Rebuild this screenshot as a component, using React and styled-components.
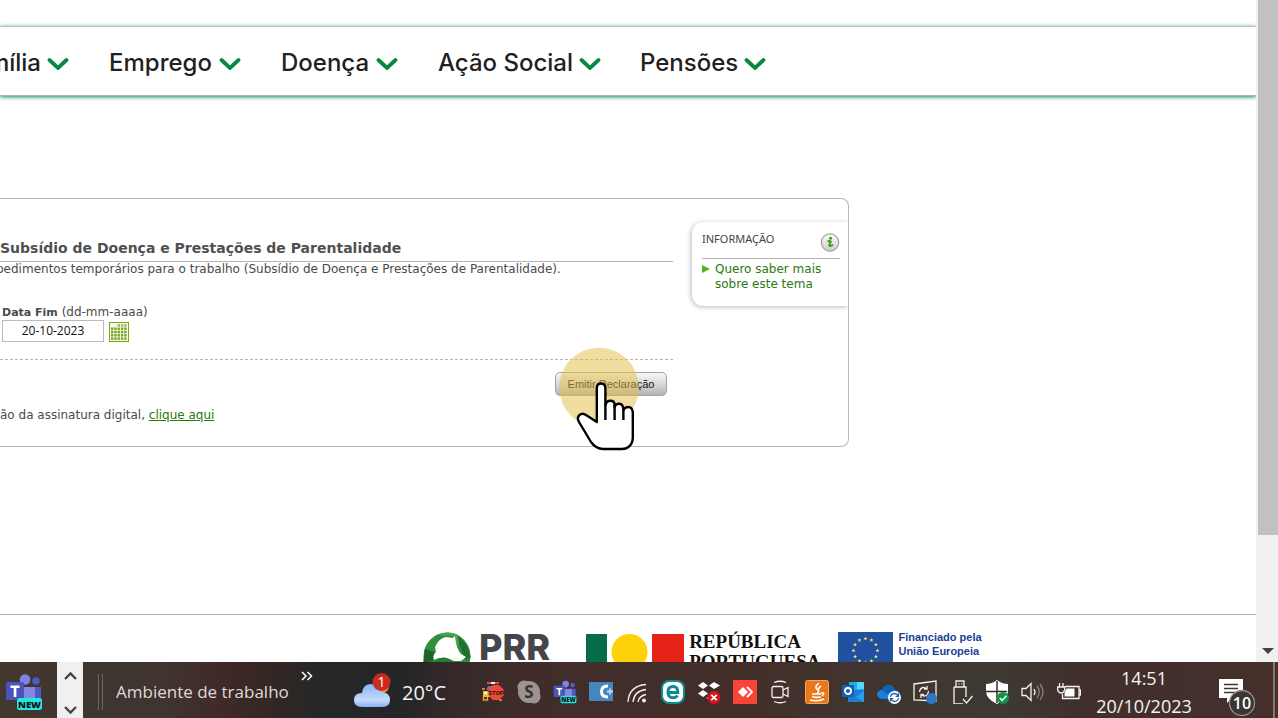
import React from "react";
import styled, { createGlobalStyle } from "styled-components";

const Global = createGlobalStyle`
  *, *::before, *::after { box-sizing: border-box; }
  body { margin: 0; background: #fff; overflow: hidden; font-family: "DejaVu Sans", sans-serif; color: #4a4a4a; }
  button { font: inherit; color: inherit; background: none; border: 0; padding: 0; margin: 0; cursor: pointer; }
  svg { display: block; flex: none; }
`;

const Desktop = styled.div`
  display: flex;
  flex-direction: column;
  height: 100vh;
`;
const Browser = styled.div`
  display: flex;
  flex: 1;
  min-height: 0;
`;
const Page = styled.div`
  flex: 1;
  min-width: 0;
  overflow: hidden;
  display: flex;
  flex-direction: column;
`;

/* Navigation */
const NavBar = styled.nav`
  flex: none;
  margin-top: 26px;
  height: 70px;
  padding-top: 3px;
  display: flex;
  align-items: center;
  border-top: 1px solid #bdc4c0;
  border-bottom: 1px solid #b9aeb2;
  box-shadow: 0 1px 4px #0b8a4c;
`;
const NavList = styled.div`
  display: flex;
  gap: 40px;
  margin-left: -41px;
`;
const NavItem = styled.button`
  display: flex;
  align-items: center;
  gap: 6px;
  flex: none;
  width: ${(p) => p.$width}px;
  justify-content: space-between;
  font: 500 24px/32px Inter, sans-serif;
  color: #212121;
  white-space: nowrap;
  &:first-child { justify-content: flex-end; }
`;

/* Form panel */
const Panel = styled.main`
  flex: none;
  width: 100%;
  max-width: 849px;
  margin-top: 102px;
  display: flex;
  justify-content: space-between;
  align-items: flex-start;
  border: 1px solid #b9b9b9;
  border-left: 0;
  border-radius: 0 8px 8px 0;
`;
const FormColumn = styled.form`
  flex: 1;
  max-width: 673px;
  padding: 38px 0 23px;
  font-size: 12px;
  line-height: 15px;
`;
const Title = styled.h1`
  margin: 0;
  padding-bottom: 2px;
  font: bold 14px/22px "DejaVu Sans", sans-serif;
  color: #505050;
  border-bottom: 1px solid #b5b5b5;
  white-space: nowrap;
`;
const Description = styled.p`
  margin: 0 0 28px;
  text-indent: -4px;
  white-space: nowrap;
`;
const Field = styled.div`
  padding: 0 0 17px 2px;
  border-bottom: 1px dashed #b5b5b5;
`;
const Label = styled.label`
  display: block;
  b { font-size: 11px; }
`;
const DateRow = styled.div`
  display: flex;
  align-items: flex-end;
  gap: 5px;
`;
const DateInput = styled.input`
  width: 102px;
  height: 22px;
  border: 1px solid #bbb;
  padding: 0 0 2px;
  text-align: center;
  font: 12px "Open Sans", sans-serif;
  color: #111;
`;
const Actions = styled.div`
  display: flex;
  justify-content: flex-end;
  padding: 12px 6px 12px 0;
`;
const ButtonAnchor = styled.div`
  position: relative;
`;
const SubmitButton = styled.button`
  display: block;
  width: 112px;
  height: 24px;
  border: 1px solid #a9a1a4;
  border-radius: 5px;
  background: linear-gradient(#f7f7f7, #d8d8d8 50%, #b4b4b4);
  font: 11px/20px "Liberation Sans", sans-serif;
  color: #111;
  white-space: nowrap;
`;
const Pointer = styled.svg`
  position: absolute;
  left: 4px;
  top: -25px;
  pointer-events: none;
`;
const Note = styled.p`
  margin: 0;
  a { color: #2a7a0c; }
`;

const InfoBox = styled.aside`
  width: 156px;
  height: 84px;
  margin-top: 23px;
  padding: 8px 8px 0 10px;
  border-radius: 11px 0 0 11px;
  box-shadow: -1px 1px 5px #bbb;
  clip-path: inset(-8px 0 -8px -8px);
`;
const InfoHead = styled.div`
  display: flex;
  justify-content: space-between;
  height: 29px;
  border-bottom: 1px solid #b5b5b5;
  h2 { margin: 0; font: 11px/18px "Noto Sans", sans-serif; color: #444; }
  svg { margin-top: 2px; }
`;
const InfoLink = styled.a`
  display: flex;
  gap: 5px;
  padding-top: 3px;
  font-size: 12px;
  line-height: 15px;
  color: #2a7a0c;
  text-decoration: none;
  white-space: nowrap;
  svg { margin-top: 3px; }
`;

/* Sponsors */
const Footer = styled.footer`
  flex: none;
  margin-top: 167px;
  padding: 17px 0 0 423px;
  border-top: 1px solid #b5b5b5;
  display: flex;
  align-items: flex-start;
`;
const Brand = styled.div`
  display: flex;
  align-items: flex-start;
  gap: ${(p) => p.$gap}px;
  margin-right: ${(p) => p.$after || 0}px;
  white-space: nowrap;
`;
const PrrName = styled.span`
  font: 800 36px/30px Inter, sans-serif;
  color: #45464b;
`;
const RepublicName = styled.span`
  font: bold 19px/20px "Liberation Serif", serif;
  color: #111;
`;
const UnionName = styled.span`
  font: bold 11px/14px "Liberation Sans", sans-serif;
  color: #1b3f94;
  margin-top: -2px;
`;

/* Window scroll bar */
const ScrollBar = styled.div`
  width: 22px;
  padding-left: 2px;
  background: #f1f1f1;
  display: flex;
  flex-direction: column;
`;
const ScrollThumb = styled.div`
  flex: 535;
  background: #c1c1c1;
`;
const ScrollRest = styled.div`
  flex: 105;
`;
const ScrollArrow = styled.button`
  height: 22px;
  display: grid;
  place-items: center;
`;

/* Task bar */
const TaskBar = styled.footer`
  flex: none;
  height: 56px;
  display: flex;
  align-items: stretch;
  color: #f4f4f4;
  font-family: "Open Sans", sans-serif;
  background: linear-gradient(90deg, #43382f 0, #3d3530 110px, #403431 160px, #402a28 220px, #352624 265px, #262728 320px, #242526 400px, #34292a 450px, #402d2a 520px, #432e29 740px, #403630 900px, #3e3933 1000px, #402f2b 1080px, #452f2b 100%);
`;
const TaskApp = styled.button`
  width: 57px;
  display: grid;
  place-items: center start;
  padding: 3px 0 0 5px;
`;
const Stepper = styled.div`
  width: 26px;
  background: #f0f0f0;
  display: flex;
  flex-direction: column;
  justify-content: space-between;
  align-items: center;
  padding: 9px 0 3px;
`;
const Grip = styled.div`
  width: 5px;
  height: 36px;
  margin: 12px 13px 0 15px;
  border: solid #6e6862;
  border-width: 0 1px;
`;
const Toolbar = styled.div`
  display: flex;
  width: 238px;
  font-size: 17px;
  line-height: 60px;
  color: #dedbd9;
  white-space: nowrap;
  button { align-self: flex-start; margin: 9px 0 0 12px; }
`;
const Weather = styled.button`
  display: flex;
  align-items: center;
  gap: 11px;
  width: 121px;
  font-size: 20px;
  white-space: nowrap;
  span { padding-top: 5px; }
`;
const Tray = styled.div`
  display: flex;
  padding-top: 4px;
`;
const TrayButton = styled.button`
  width: 36px;
  display: grid;
  place-items: center;
`;
const Clock = styled.time`
  width: 114px;
  text-align: center;
  font-size: 18px;
  line-height: 28px;
  padding-top: 2px;
  white-space: nowrap;
`;
const Alerts = styled.button`
  display: grid;
  place-items: center;
  margin: 14px 0 0 17px;
`;
const Edge = styled.div`
  margin-left: auto;
  width: 5px;
  border-left: 2px solid #857872;
`;

const Chevron = () => (
  <svg width="22" height="14" viewBox="0 0 22 14" fill="none" stroke="#078943" strokeWidth="3.800" strokeLinecap="round">
    <path d="M2.500 4 11 12l8.500-8" />
  </svg>
);

const CalendarIcon = () => (
  <svg width="20" height="20" viewBox="0 0 20 20">
    <rect x=".5" y=".5" width="19" height="19" fill="#f6f7f0" stroke="#78a615" />
    {[0, 1, 2, 3, 4].map((r) =>
      [0, 1, 2, 3, 4].map((c) =>
        r === 0 && c < 2 ? null : (
          <rect key={`${r}${c}`} x={2 + c * 3.3} y={2.200 + r * 3.3} width="2.400" height="2.400" fill={r === 0 ? "#96b750" : "#79a51a"} />
        )
      )
    )}
  </svg>
);

const InfoIcon = () => (
  <svg width="20" height="20" viewBox="0 0 20 20">
    <defs>
      <linearGradient id="disc" x2="0" y2="1">
        <stop stopColor="#fff" />
        <stop offset="1" stopColor="#ccc" />
      </linearGradient>
    </defs>
    <circle cx="10" cy="10.500" r="8.700" fill="url(#disc)" stroke="#a0a0a0" strokeWidth="1.200" />
    <circle cx="10.500" cy="6.200" r="1.500" fill="#3c9a1c" />
    <path d="M7.500 9.700Q10 8.500 10.800 9.500L9.200 13.500Q10 15 13 12.800" fill="none" stroke="#3c9a1c" strokeWidth="1.900" />
  </svg>
);

const PrrMark = () => (
  <svg width="49" height="48" viewBox="0 0 49 48">
    <circle cx="24" cy="24" r="23.500" fill="#2f8f3c" />
    <path d="M24 .5C38 0 47 12 47.500 26L39 19 29 4 15 3Q19 .7 24 .5Z" fill="#48a54c" />
    <path d="M35 4Q46 11 47.500 25L43 29 36 13Z" fill="#236f31" />
    <path d="M2 17 11 20 12 28 0 32Z" fill="#1c642b" />
    <path d="M12 15Q16 6 23 5L30 6L32 4Q33 16 38 22L43 25L38 29H31Q20 23 11 28Q9 23 13 20Z" fill="#fff" />
    <path d="M13 28Q22 22 30 30L24 40H4Z" fill="#277c36" />
  </svg>
);

const FlagMark = () => (
  <svg width="98" height="42" viewBox="0 0 98 42">
    <path d="M0 2h21v36H0z" fill="#076b48" />
    <circle cx="43.500" cy="20" r="18" fill="#ffd10a" />
    <path d="M66 2h32v36H66z" fill="#e62318" />
  </svg>
);

const EuropeFlag = () => (
  <svg width="55" height="37" viewBox="0 0 55 37">
    <path d="M0 0h55v37H0z" fill="#2050a0" />
    {Array.from({ length: 12 }, (_, i) => {
      const a = (i * Math.PI) / 6;
      return (
        <path
          key={i}
          transform={`translate(${27.5 + 12 * Math.sin(a)} ${18.5 - 12 * Math.cos(a)})`}
          d="M0-2 .6-.6 2-.6.8.4 1.200 1.800 0 1-1.200 1.800-.8.4-2-.6-.6-.6Z"
          fill="#f7e267"
        />
      );
    })}
  </svg>
);

const HandPointer = () => (
  <Pointer width="80" height="106" viewBox="0 0 80 106" aria-hidden="true">
    <circle cx="40" cy="40.500" r="39.800" fill="#e2bd48" fillOpacity=".52" />
    <path
      d="M37.800 75V41Q37.800 36.500 42 36.500T46.400 41V58Q47.500 53.700 51.500 53.700T55.600 58V60Q56.600 56.700 60 56.700T64.400 61V63Q66 60 69.500 60T73.800 65V91Q73.500 97 69.500 100Q67 102 63 102H44Q37 102 32 95L20 75Q17.500 70.500 20.500 68Q23.500 65.500 27 68Z"
      fill="#fff"
      stroke="#000"
      strokeWidth="2.400"
      strokeLinejoin="round"
    />
    <path d="M46.400 57V73M55.600 58V73M64.400 61V73" stroke="#000" strokeWidth="2.400" />
  </Pointer>
);

const TeamsIcon = ({ size }) => (
  <svg width={size} height={size} viewBox="0 0 38 38">
    <circle cx="20" cy="6.500" r="5.300" fill="#7b83eb" />
    <circle cx="31" cy="8" r="3.700" fill="#5059c9" />
    <path d="M26 14h10v16H26z" fill="#5059c9" />
    <path d="M12 14h18v17H12z" fill="#8489df" />
    <rect x="1" y="9" width="18" height="18" rx="1.500" fill="#4b53bc" />
    <path d="M5.500 12.500h9v2.500H11.400v9H8.700v-9H5.500z" fill="#fff" />
    <rect x="12" y="25" width="25" height="12" rx="2.500" fill="#25e4e2" />
    <text x="24.500" y="34.600" textAnchor="middle" fontFamily="Open Sans" fontWeight="800" fontSize="9.500" fill="#111">NEW</text>
  </svg>
);

const CloudIcon = () => (
  <svg width="37" height="36" viewBox="0 0 37 36">
    <defs>
      <linearGradient id="cloud" x2="0" y2="1">
        <stop stopColor="#83b4f5" />
        <stop offset=".7" stopColor="#c6dafb" />
        <stop offset="1" stopColor="#87b1f0" />
      </linearGradient>
    </defs>
    <circle cx="28" cy="14" r="7" fill="#f4a323" />
    <path d="M8 35Q0 35 0 28Q0 21 8 21Q9 12 17 12Q25 12 27 20Q36 20 36 28Q36 35 28 35Z" fill="url(#cloud)" />
    <circle cx="27.500" cy="10" r="9" fill="#cc2a20" />
    <text x="27.500" y="15" textAnchor="middle" fontFamily="Open Sans" fontSize="14" fill="#fff">1</text>
  </svg>
);

const line = { fill: "none", stroke: "#f5f2ef", strokeWidth: 1.3 };
const trayIcons = [
  ["Polícia", <>
    <path d="M6 2h12v2H6z" fill="#e5483c" /><path d="M10 2h4v2h-4z" fill="#eee" />
    <path d="M4 9 6 5h12l3 5v8H2v-7Z" fill="#22242a" /><path d="m7 6-2 4h6l2-4Z" fill="#6d7684" />
    <path d="M2 11h7v6H2z" fill="#eebc3b" /><path d="M3 12h3v2H3z" fill="#fff3c4" />
    <path d="M1 9h3M2.500 17v3h4v-3M18 20h3" stroke="#e9a42c" strokeWidth="1.500" fill="none" />
    <path d="m12 5h6l4.500 4.500v6L18 20h-6l-4.500-4.500v-6Z" fill="#ef4939" />
    <text x="15" y="15" textAnchor="middle" fontFamily="Roboto" fontWeight="700" fontSize="6" fill="#26110e">STOP</text>
  </>],
  ["Skype", <>
    <circle cx="12" cy="12" r="11" fill="#9c9490" /><circle cx="7" cy="7" r="6.500" fill="#9c9490" /><circle cx="17" cy="17" r="6.500" fill="#9c9490" />
    <text x="12" y="18" textAnchor="middle" fontFamily="Open Sans" fontWeight="700" fontSize="17" fill="#3b302d">S</text>
  </>],
  ["Teams", null],
  ["Ligação", <>
    <path d="M0 2h24v19H0z" fill="#4786bd" /><path d="M19 6Q12.500 6 12.500 11.500T19 17" fill="none" stroke="#fff" strokeWidth="3" /><path d="M18 11.500h6M21 8.500v6" stroke="#b9d9ef" strokeWidth="1.800" />
  </>],
  ["Rede", <g {...line}>
    <path d="M3 22Q4 6 21 4.500M8 22Q9 11 21 9.500M13 22Q14 16 21 14.500" /><circle cx="19" cy="20.500" r="1.300" fill="#fff" />
  </g>],
  ["ESET", <>
    <rect x="1" y="1" width="22" height="22" rx="7" fill="#fff" stroke="#0a8c97" strokeWidth="2" />
    <path d="M16.500 15.500Q15 17.800 12 17.800Q7 17.800 7 12Q7 6.500 12 6.500Q17 6.500 16.800 12.500H8" fill="none" stroke="#0a8c97" strokeWidth="3" />
  </>],
  ["Dropbox", <>
    <path d="m6 2 5 3.500L6 9 1 5.500ZM17 2l6 3.500L17 9l-5-3.500ZM6 10l5 3.500L6 17l-5-3.500ZM9 18l3-1 2 3Z" fill="#fff" />
    <circle cx="17" cy="17.500" r="6.500" fill="#d7131f" /><path d="m14.300 14.800 5.400 5.400m0-5.400-5.400 5.400" stroke="#fff" strokeWidth="1.700" />
  </>],
  ["AnyDesk", <>
    <path d="M0 0h24v24H0z" fill="#f9443a" /><path d="m10 7 5 5-5 5-5-5Z" fill="#fff" /><path d="m14 7 5 5-5 5" fill="none" stroke="#fff" strokeWidth="1.800" />
  </>],
  ["Câmara", <g {...line}>
    <rect x="3" y="6.500" width="11" height="11" rx="1.500" /><path d="m14 10 5-2.500v9L14 14M5 2.500Q11 0 17 2.500M5 21.500Q11 24 17 21.500" />
  </g>],
  ["Java", <>
    <rect x=".5" y=".5" width="23" height="23" rx="2" fill="#e9771c" stroke="#f7a554" />
    <path d="M14 3Q9 7 12 9T12 14M16 6Q12 9 14 12M7 14h9M16 13Q21 12 17 16M8 16Q7 18 16 17M5 20Q12 22 19 19" fill="none" stroke="#fff" strokeWidth="1.600" />
  </>],
  ["Outlook", <>
    <path d="M8 2h15v9H8z" fill="#27a8ea" /><path d="M16 2h7v7h-7z" fill="#54daff" /><path d="M7 10h16v12H7z" fill="#1c7fd1" /><path d="M15 17 23 11v11Z" fill="#2b9fe6" />
    <rect x="1" y="5" width="12" height="12" rx="1" fill="#0f61b8" /><circle cx="7" cy="11" r="3" fill="none" stroke="#fff" strokeWidth="1.900" />
  </>],
  ["OneDrive", <>
    <path d="M5 19Q0 18 0 14Q1 10 5 10Q7 5 12 5Q17 6 18 10Q23 10 23 16V19Z" fill="#1681d9" /><path d="M5 10Q7 5 12 5Q17 6 18 10L10 14Z" fill="#0d62b8" />
    <circle cx="17.500" cy="17.500" r="6.500" fill="#fff" /><path d="M13.500 17Q14 13.500 17.500 13.500 20 13.500 21.300 16M21.500 18Q21 21.500 17.500 21.500 15 21.500 13.700 19M21.500 13.500V16.300H18.700M13.500 21.500V18.700h2.800" fill="none" stroke="#1862ad" strokeWidth="1.300" />
  </>],
  ["Atualização", <>
    <g {...line}><path d="m1 4 22-3v20L1 20Z" /><path d="M6.500 12Q7 7.500 11 7.500L14 9M14 6v3h-3M15.500 11Q15 16 11 16L8 14.500M8 18v-3.500h3" /></g>
    <circle cx="18.500" cy="18.500" r="5.500" fill="#2f76c5" />
  </>],
  ["USB", <g {...line}>
    <path d="M7 7V1h8v6M5 7h12v10M5 7v17h9M9.500 4h1M12.500 4h1M14 19l3.500 4 6-7" />
  </g>],
  ["Segurança", <>
    <path d="M12 0Q17 4 23 4V11Q23 19 12 24Q1 19 1 11V4Q7 4 12 0Z" fill="#fff" /><path d="M12 1v22M1 11.500h21" stroke="#332d2a" strokeWidth="1.500" />
    <circle cx="18" cy="18" r="6" fill="#119447" /><path d="m14.800 18 2.400 2.400 4.200-4.700" fill="none" stroke="#fff" strokeWidth="1.500" />
  </>],
  ["Som", <g {...line}>
    <path d="M1 8.500h4l5-5v17l-5-5H1ZM13 9q2 3 0 6" /><path d="M16 6q4.500 6 0 12M19 4q6 8 0 16" stroke="#8a817c" />
  </g>],
  ["Bateria", <>
    <g {...line}><path d="M8 6.500h14v12H5.500V14M22 10h1.500v5H22M2.500 3v4M6 3v4M.7 7h7v3q-1 3-3.500 3T.7 10Z" /></g><path d="M9.500 8.500h8v8H7.500V13Z" fill="#fff" />
  </>],
];

const navItems = [
  ["Família", 110],
  ["Emprego", 132],
  ["Doença", 117],
  ["Ação Social", 162],
  ["Pensões", 124],
];

export default function App() {
  return (
    <Desktop>
      <Global />
      <Browser>
        <Page>
          <NavBar>
            <NavList>
              {navItems.map(([name, width]) => (
                <NavItem key={name} $width={width} type="button">
                  {name}
                  <Chevron />
                </NavItem>
              ))}
            </NavList>
          </NavBar>

          <Panel>
            <FormColumn onSubmit={(e) => e.preventDefault()}>
              <Title>Subsídio de Doença e Prestações de Parentalidade</Title>
              <Description>
                pedimentos temporários para o trabalho (Subsídio de Doença e Prestações de Parentalidade).
              </Description>
              <Field>
                <Label htmlFor="data-fim">
                  <b>Data Fim</b> (dd-mm-aaaa)
                </Label>
                <DateRow>
                  <DateInput id="data-fim" defaultValue="20-10-2023" />
                  <button type="button" aria-label="Abrir calendário">
                    <CalendarIcon />
                  </button>
                </DateRow>
              </Field>
              <Actions>
                <ButtonAnchor>
                  <SubmitButton type="submit">Emitir Declaração</SubmitButton>
                  <HandPointer />
                </ButtonAnchor>
              </Actions>
              <Note>
                ão da assinatura digital, <a href="#assinatura">clique aqui</a>
              </Note>
            </FormColumn>
            <InfoBox>
              <InfoHead>
                <h2>INFORMAÇÃO</h2>
                <InfoIcon />
              </InfoHead>
              <InfoLink href="#tema">
                <svg width="8" height="8" viewBox="0 0 8 8">
                  <path d="M0 0 8 4 0 8Z" fill="#58b414" />
                </svg>
                <span>
                  Quero saber mais
                  <br />
                  sobre este tema
                </span>
              </InfoLink>
            </InfoBox>
          </Panel>

          <Footer>
            <Brand $gap={7} $after={36}>
              <PrrMark />
              <PrrName>PRR</PrrName>
            </Brand>
            <Brand $gap={5} $after={18}>
              <FlagMark />
              <RepublicName>
                REPÚBLICA
                <br />
                PORTUGUESA
              </RepublicName>
            </Brand>
            <Brand $gap={5}>
              <EuropeFlag />
              <UnionName>
                Financiado pela
                <br />
                União Europeia
              </UnionName>
            </Brand>
          </Footer>
        </Page>
        <ScrollBar>
          <ScrollThumb />
          <ScrollRest />
          <ScrollArrow type="button" aria-label="Deslocar para baixo">
            <svg width="12" height="6" viewBox="0 0 12 6">
              <path d="M0 0h12L6 6Z" fill="#444" />
            </svg>
          </ScrollArrow>
        </ScrollBar>
      </Browser>

      <TaskBar>
        <TaskApp type="button" aria-label="Teams">
          <TeamsIcon size={38} />
        </TaskApp>
        <Stepper>
          {["M1 8 6.500 2.500 12 8", "M1 2 6.500 7.500 12 2"].map((d) => (
            <button key={d} type="button" aria-label="Deslocar">
              <svg width="13" height="10" viewBox="0 0 13 10" fill="none" stroke="#444" strokeWidth="2.400">
                <path d={d} />
              </svg>
            </button>
          ))}
        </Stepper>
        <Grip />
        <Toolbar>
          <span>Ambiente de trabalho</span>
          <button type="button" aria-label="Mais">
            <svg width="12" height="10" viewBox="0 0 12 10" fill="none" stroke="#fff" strokeWidth="1.500">
              <path d="m1 1 4 4-4 4M6.500 1l4 4-4 4" />
            </svg>
          </button>
        </Toolbar>
        <Weather type="button">
          <CloudIcon />
          <span>20°C</span>
        </Weather>
        <Tray>
          {trayIcons.map(([name, art]) => (
            <TrayButton key={name} type="button" aria-label={name}>
              {art ? (
                <svg width="24" height="24" viewBox="0 0 24 24">
                  {art}
                </svg>
              ) : (
                <TeamsIcon size={24} />
              )}
            </TrayButton>
          ))}
        </Tray>
        <Clock dateTime="2023-10-20T14:51">
          14:51
          <br />
          20/10/2023
        </Clock>
        <Alerts type="button" aria-label="Notificações">
          <svg width="38" height="38" viewBox="0 0 38 38">
            <path d="M1 1h24v19H14l-5 5v-5H1Z" fill="#fff" />
            <path d="M6 6.500h14M6 10.500h14M6 14.500h14" stroke="#443430" strokeWidth="1.300" />
            <circle cx="24" cy="25" r="12.500" fill="#3a3634" stroke="#99928e" strokeWidth="1.300" />
            <text x="24" y="31" textAnchor="middle" fontFamily="Open Sans" fontWeight="600" fontSize="16" fill="#fff">10</text>
          </svg>
        </Alerts>
        <Edge />
      </TaskBar>
    </Desktop>
  );
}
